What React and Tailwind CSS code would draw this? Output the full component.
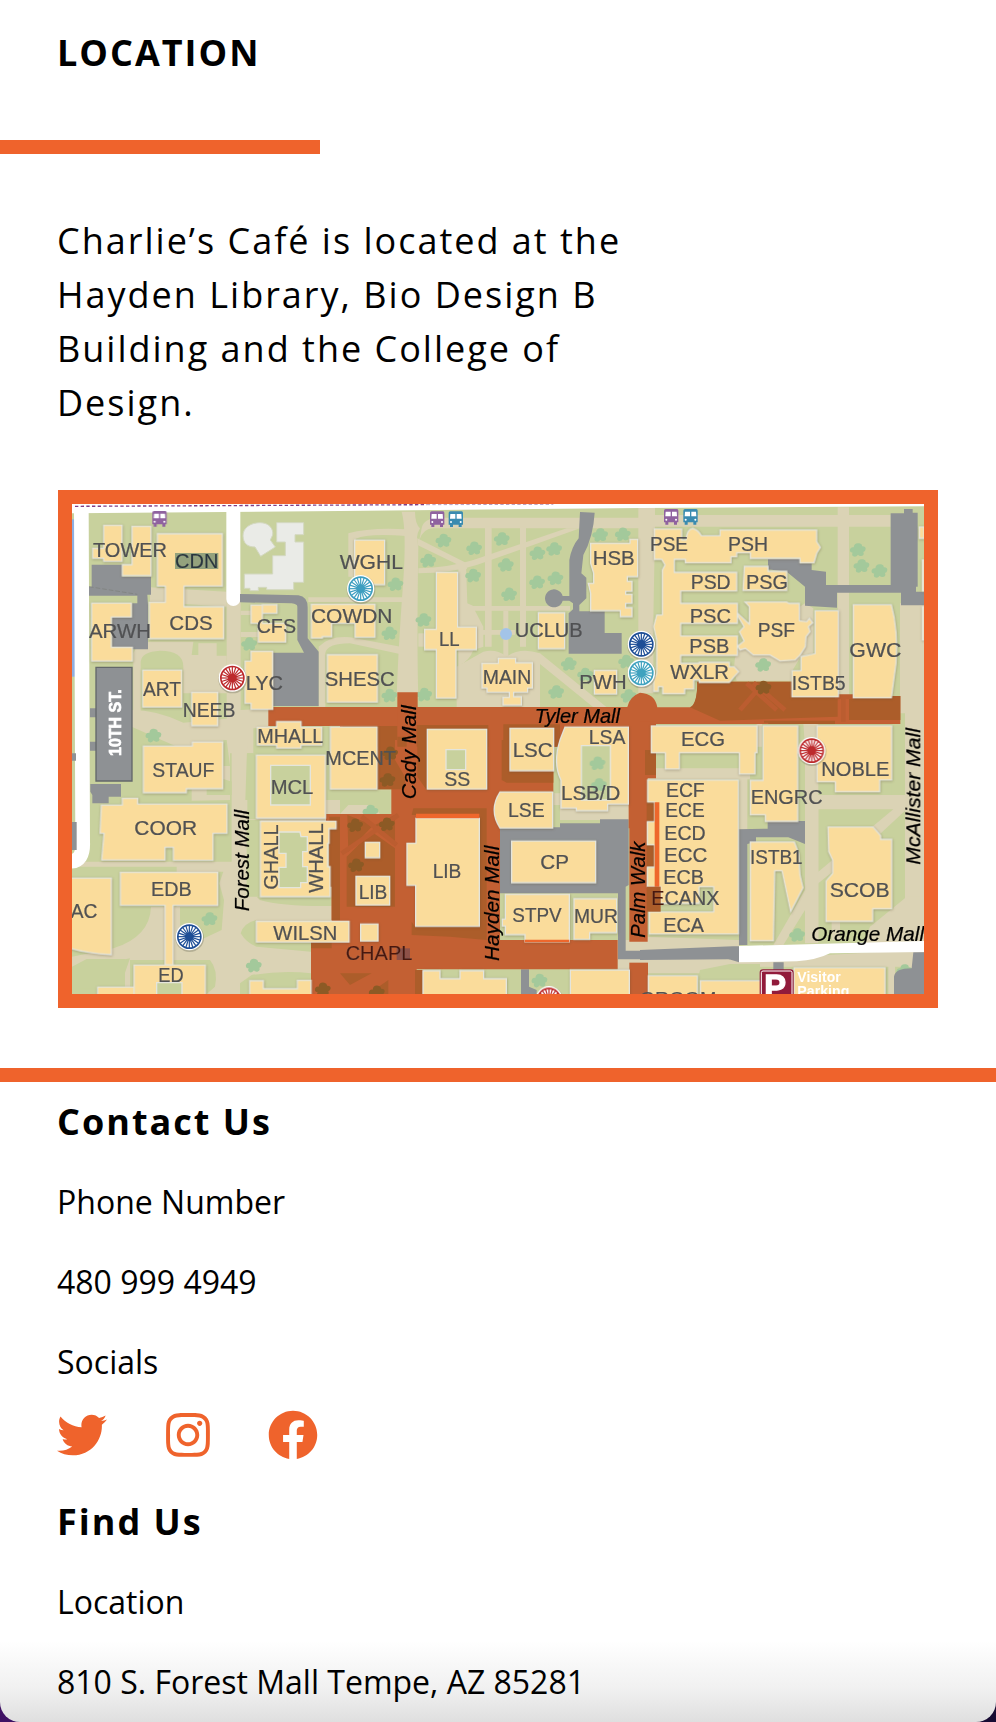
import { FaTwitter, FaInstagram, FaFacebook } from "react-icons/fa";

// The map is drawn as six tiles; each tile has its own local origin.
const TILES = {
  nw: [0, 0],
  n: [870, 0],
  ne: [1770, 0],
  sw: [0, 780],
  s: [870, 780],
  se: [1770, 780],
};

function Layer({ shapes, ...rest }) {
  return (
    <g {...rest}>
      {Object.entries(shapes).map(([tile, paths]) => (
        <g key={tile} transform={`translate(${TILES[tile].join(" ")})`}>
          {paths.map((d, i) => (
            <path key={i} d={d} />
          ))}
        </g>
      ))}
    </g>
  );
}

const walks = {
  nw: [
    "M530 330H572V690L660 686V742L610 745V820H425L245 740V690Q320 690 400 728L530 716Z",
    "M300 322L530 335V380L300 365Z",
    "M250 700V520Q260 490 300 485H430L425 525H445V490H500V527H530V640H400V560Q400 512 330 512Q275 515 272 545V700Z",
    "M572 392H606V405H572ZM572 456H628V471H572Z",
    "M775 352H1060V366H775Z",
    "M806 690V500Q840 466 900 472L1060 502V524L900 490Q830 490 826 520V690Z",
    "M895 290V160Q960 142 1070 148V168Q950 160 918 176V290Z",
  ],
  n: [
    "M185 95H225Q225 130 240 145Q225 170 235 200Q230 500 235 650H170Q175 500 190 300Q200 150 185 95Z",
    "M245 145Q250 113 300 113H900V145H280Q250 145 238 180Z",
    "M435 140H455V500H435ZM540 140H558V500H540Z",
    "M232 175L385 252L380 268L345 250L232 195Z",
    "M235 265Q330 262 400 240L680 145H720L410 255Q330 280 235 280Z",
    "M355 255H378L382 370L400 378H690V392H405L430 440V500L400 510Q390 540 355 560Z",
    "M490 392H505V530H490ZM405 450H525V464H405Z",
    "M350 560L430 515Q470 505 500 530Q540 500 600 520L800 682H760L600 552V682H350Z",
    "M235 460H256V500H235Z",
  ],
  ne: [
    "M15 72H45V150L40 420V640H-5V72Z",
    "M45 105H752V140H45Z",
    "M593 82H627V650H593Z",
    "M290 515L330 480L495 370L520 385V520L482 530L455 575V602H290Q275 560 290 515Z",
    "M780 370H852V1500H795V700H780Z",
    "M350 700H366V800H350ZM490 730H535V1385H495V800Z",
  ],
  sw: [
    "M425 0H540V180L425 182Z",
    "M545 0H592L586 180H900V560H840V800H190L240 655L66 690V650L190 625Q300 590 303 500H380V380H66V365H545Z",
  ],
  s: [
    "M0 152H152V200L155 222H0Z",
    "M640 160H870V240H640ZM832 600H1170V690H832Z",
  ],
  se: [
    "M0 85H330V118H0ZM298 85H322V270H298Z",
    "M495 165H800V208H535V395L760 208H800L720 282L535 430V610H495V510L430 615H400L495 450Z",
    "M0 590H297V700H0ZM297 660L820 630V680H340V705H297ZM745 670H765V762H745Z",
    "M575 540H600V600H575ZM690 560L800 470H852V610H670Z",
  ],
};

const lawns = {
  sw: [
    "M470 100L545 125V165H470ZM520 0H530L540 78H520Z",
    "M572 580Q580 550 618 540V600H783V635L620 620Q590 610 572 580Z",
    "M620 470H845V498Q700 500 630 480Z",
    "M240 660H480Q505 690 495 740L470 762H240ZM66 680L110 657H225V745H90L66 720Z",
    "M390 500H503V395H520L508 430L522 480L515 570L440 605L390 590Z",
    "M570 762V730L605 705Q700 690 783 700V762Z",
    "M592 40H620V238H592ZM590 240H632V470H590Z",
  ],
  s: ["M0 152H152V222H120L95 195H25L0 222ZM430 690H695V762H430ZM640 195H660V265H640Z"],
  se: [
    "M735 50H795V165H755V120H735ZM765 350H795V470L700 545V508H760Z",
    "M23 575H297V600L23 590ZM180 690L270 672H360V725H172Z",
  ],
};

const roads = {
  nw: [
    "M125 254H217V290H303V344H292L294 375V508H186V410H246V370H262V347H117V320H125Z",
    "M570 342L745 346Q774 350 773 385V475L806 515V678H668V518H762L742 480V380Q742 372 725 370L570 367Z",
    "M120 685H138V712H120ZM120 785H138V812H120Z",
  ],
  n: [
    "M720 96L764 98Q760 170 730 225L724 280L739 293V355L718 375V394H794V459H845V521H686V400L699 388V370L688 362H668A27 27 0 1 1 668 348H688V240Q695 200 716 175Z",
  ],
  ne: [
    "M384 237H480V250H515V270L558 275V315H752V100H792V87H818V98H833V320H828V335H852V376H783V338H591V383L495 377V320L440 275L384 268Z",
  ],
  sw: ["M121 132H213V170H176V190H127V165L121 155ZM66 40H78V62H66ZM66 246H80V330H66Z"],
  s: [
    "M480 262H660V250H780V238H866V435L857 440V632H1170V658H834V460H480Z",
    "M543 688H567V740L590 750V762H543Z",
  ],
  se: [
    "M295 268L383 266V243H495V312L445 292H348V305L322 312V615H297V667L265 657L0 660V630L297 618Z",
    "M400 667H431V690H400ZM820 637H852V762H762V710Q765 685 815 685Z",
  ],
};

const mallRed = {
  nw: ["M655 681H1050V780H878V738H655Z"],
  n: ["M172 637H233V681H862Q868 650 900 638Q945 640 952 682H1050Q1072 676 1072 605H1356V648H1681V732H924V800H0V738H172Z"],
  sw: ["M828 222H1030V762H783V605H845V427H838V270H828Z"],
  s: [
    "M0 0H948V115H923V605H868V265H866V-20H640V155H480V600H833V688H230V762H0V222H154V148H112V0Z",
    "M868 668H924V762H868Z",
  ],
  ne: ["M0 725H48V800H0Z"],
};

const mallShade = {
  nw: ["M878 738H1042V780H878Z"],
  n: ["M172 770H200V800H172ZM230 735H445V800H230ZM490 733H660V800H490Z"],
  ne: ["M172 605H456V648H593V710L240 722L150 682Q172 672 172 605ZM627 648H781V720H627Z", "M385 722H585V732H385ZM372 722H490V728H372Z"],
  sw: ["M838 230H870V440H838ZM783 605H845V625H783ZM845 430H870V540H845Z"],
  s: [
    "M112 0H165V60L195 110V148H112ZM232 0H262V148H440V0H445V150H260L232 110ZM485 0H510V95H640V128H500L485 120Z",
    "M220 205H440V600L330 590L215 585V545L225 560V436L201 435V310H228V225H215Z",
    "M22 225L100 255L25 335ZM165 225V310L105 255ZM20 350L95 275L165 325V500H20Z",
    "M0 700H95L30 735ZM85 762L145 720V762ZM225 690H250V762H225Z",
  ],
  se: ["M15 30H48V105H15ZM20 185H45V245H20ZM20 315H45V380H20Z"],
};

const buildings = {
  nw: [
    "M161 136H216V244H161V235H128V205H161Z",
    "M246 139H303V287H217V254H246Z",
    "M322 161H517V318H402V380H521V476H298V367H346V318H322Z",
    "M125 369H244V411H184V502H247V543H125Z",
    "M278 570H395V681H278Z",
    "M425 637H503V737H425Z",
    "M603 514H668V688H603V670H585V543H603Z",
    "M603 375H637V400H681V374H637V430H707V486H625V430H603Z",
    "M784 373H975V472H915V430H845V470H817V474H784Z",
    "M832 524H982V666H832Z",
    "M622 742H680V725H753V742H815V795H753V804H680V795H622Z",
    "M841 741H981V927H841Z",
  ],
  n: [
    "M44 180H134V314H44Z",
    "M289 277H353V441H409V509H348V654H289V509H254V448H289Z",
    "M475 535H527V548H577V624H563V637H521V650H544V675H489V652H508V637H441V624H426V550H475Z",
    "M595 398H674V506H595Z",
    "M752 190H870V178H893V290H862V304H876V334H857V343H876V370H857V383H876V410H841V392H752V340L745 310H761V280L752 250Z",
    "M763 571H830V642H763Z",
    "M262 748H440V927H262Z",
    "M510 745H641V872H510Z",
    "M675 741H865V972H803V992H709V984H663V900Q638 850 660 780Z",
  ],
  ne: [
    "M43 147H125V180H138Q140 148 158 145Q175 150 184 167H240V150H530V185L541 202L530 220L522 248H480V235H331V218H290V230H273V248H136V238H103V277H290V333H122V370H292V430H122V468H292V526H122V550H177V547H268V560H282L296 575L282 590L268 607H178V600H161V627H134V641H68V620H55V634H41V600L50 580V480L41 440L50 405H67V270L75 255L65 238H43Z",
    "M313 259H384V274H440V331H309Z",
    "M315 366H440L447 370H478V422L500 425L508 415L518 428L505 440L510 455L498 470L496 500L480 525L465 540L420 543L390 525H340L316 505L300 510L293 498L312 483L298 455L312 440L293 408V400L328 432V380Z",
    "M525 392H595V650H456V572H483V530L525 521Z",
    "M640 374H754Q775 450 768 550L754 653H640Z",
    "M838 141H852V175H838ZM847 240H852V333H847ZM847 380H852V480H847Z",
    "M34 738H351V818H345V882H298V818H118V867H76V818H34Z",
    "M369 738H473V1024H376V1004H331V901H369Z",
    "M531 738H755V900H719V935H586V905H531Z",
  ],
  sw: [
    "M280 18H427V6H518V146H409V158H280Z",
    "M154 195H217V175H263V192H531V280H489V361H370V322H345V360H155L162 280H150Z",
    "M211 397H503V496H369V675H345V496H211Z",
    "M60 414H184V644Q110 640 60 625Z",
    "M252 675H466V780H252ZM143 741H252V780H143Z",
    "M619 45H826V234H619Z",
    "M631 244H858V266H837V310H833V380H840V470H631Z",
    "M619 544H897V606H619Z",
    "M599 722H640V746H742V721H783V780H599Z",
  ],
  s: [
    "M228 235H418V559H227V436H201V310H228Z",
    "M76 307H119V353H76ZM48 409H149V495H48ZM62 552H114V603H62Z",
    "M480 156H638V264H480Q445 210 480 156Z",
    "M515 303H767V428H515Z",
    "M496 463H688V605H555V584H496V558H487V537H496Z",
    "M702 476H830V578H749V598H702Z",
    "M249 692H300V716H360V692H431V716H499V780H249ZM691 690H868V780H691Z",
  ],
  se: [
    "M23 120H295V582H28V516H221V440H177V490H62V440H22V382H44V314H22V245H44V186H23Z",
    "M331 306H463L476 340L480 405L489 443L452 515L426 392H404L400 602H331Z",
    "M564 261H699L722 287V298H755V506H698V544H558V423L578 400V360L566 335Z",
    "M25 707H172V780H25ZM181 722H365V780H181ZM462 683H735V780H462Z",
  ],
};

const courts = {
  n: ["M724 797H811V960H724Z"],
  sw: ["M662 76H781V195H662ZM687 276H750L753 290H772V335H758V380H772V428H752V443H687V382H708V340H687ZM320 728H396V780H320Z"],
  s: ["M318 29H377V89H318Z"],
};

const pale = {
  nw: [
    "M680 128H761V164H735V186H761V307H731V329H650V322H625V332H600V325H583V282H668V227H706V186H680Z",
    "M579 168C578 142 604 128 630 128C656 128 671 145 668 165L661 180L676 201L632 229L615 201C592 201 580 190 579 168Z",
  ],
};

const trees = {
  nw: [[597, 492], [310, 767]],
  n: [[310, 182], [402, 205], [485, 177], [264, 242], [497, 255], [592, 220], [642, 207], [399, 287], [166, 313], [507, 343], [591, 307], [646, 295], [250, 420], [148, 460], [148, 647], [252, 644], [686, 552], [648, 636], [848, 163], [780, 165], [865, 648], [735, 584], [858, 545]],
  ne: [[653, 210], [664, 258], [718, 273], [369, 555]],
  sw: [[478, 537], [611, 677]],
  s: [[91, 215], [598, 722]],
  se: [[471, 585], [793, 693]],
};

const courtTrees = { s: [[772, 70], [776, 135]] };

const shadedTrees = {
  ne: [[370, 623]],
  sw: [[818, 748]],
  s: [[45, 256], [140, 253], [48, 376], [142, 120], [110, 757], [150, 40]],
};

function Trees({ spots, fill }) {
  return (
    <g fill={fill}>
      {Object.entries(spots).flatMap(([tile, pts]) =>
        pts.map(([x, y]) => (
          <path
            key={`${tile}-${x}-${y}`}
            transform={`translate(${TILES[tile][0] + x} ${TILES[tile][1] + y})`}
            d="M-12-8Q-10-23 5-20Q14-18 13-11Q24-12 24-3Q23 5 17 6Q21 16 11 18Q4 19 1 14Q-5 23-13 19Q-19 15-15 8Q-25 8-23-2Q-20-10-12-8Z"
          />
        ))
      )}
    </g>
  );
}

// [tile, text, centre x, baseline, width]
const labels = [
  ["nw", "TOWER", 240, 231, 222],
  ["nw", "CDN", 440, 264, 130],
  ["nw", "CDS", 423, 450, 130],
  ["nw", "ARWH", 210, 475, 186],
  ["nw", "CFS", 679, 459, 118],
  ["nw", "ART", 336, 648, 114],
  ["nw", "LYC", 643, 631, 112],
  ["nw", "NEEB", 477, 711, 158],
  ["nw", "MHALL", 721, 790, 198],
  ["n", "WGHL", 94, 266, 190],
  ["n", "COWDN", 35, 428, 244],
  ["n", "LL", 328, 497, 62],
  ["n", "SHESC", 59, 617, 210],
  ["n", "UCLUB", 626, 470, 204],
  ["n", "MAIN", 501, 611, 146],
  ["n", "HSB", 821, 255, 126],
  ["n", "PWH", 789, 626, 142],
  ["n", "LSA", 801, 793, 110],
  ["ne", "PSE", 87, 213, 114],
  ["ne", "PSH", 324, 213, 120],
  ["ne", "PSD", 212, 327, 120],
  ["ne", "PSG", 381, 327, 126],
  ["ne", "PSC", 211, 429, 124],
  ["ne", "PSF", 409, 472, 112],
  ["ne", "PSB", 208, 519, 120],
  ["ne", "WXLR", 179, 597, 176],
  ["ne", "ISTB5", 536, 629, 162],
  ["ne", "GWC", 706, 530, 156],
  ["ne", "ECG", 189, 797, 132],
  ["sw", "STAUF", 400, 110, 186],
  ["sw", "MCL", 726, 163, 128],
  ["sw", "COOR", 347, 286, 188],
  ["sw", "EDB", 364, 469, 122],
  ["sw", "AC", 102, 535, 80],
  ["sw", "ED", 363, 727, 76],
  ["sw", "WILSN", 766, 600, 192],
  ["s", "MCENT", 62, 74, 212],
  ["s", "SS", 352, 138, 78],
  ["s", "LSC", 578, 51, 120],
  ["s", "LSB/D", 752, 180, 178],
  ["s", "LSE", 559, 231, 110],
  ["s", "LIB", 321, 414, 86],
  ["s", "LIB", 99, 477, 86],
  ["s", "CP", 644, 386, 86],
  ["s", "STPV", 591, 547, 148],
  ["s", "MUR", 768, 550, 132],
  ["se", "ECF", 136, 170, 116],
  ["se", "ECE", 135, 232, 118],
  ["se", "ECD", 135, 299, 124],
  ["se", "ECC", 137, 366, 130],
  ["se", "ECB", 131, 431, 122],
  ["se", "ECANX", 136, 494, 204],
  ["se", "ECA", 131, 576, 122],
  ["se", "ENGRC", 440, 191, 216],
  ["se", "NOBLE", 646, 107, 204],
  ["se", "ISTB1", 409, 372, 158],
  ["se", "SCOB", 659, 471, 180],
  ["se", "GROOM", 114, 799, 230],
];

function MapText({ x, y, width, rotate, children, ...rest }) {
  return (
    <text
      transform={`translate(${x} ${y})${rotate ? " rotate(-90)" : ""}`}
      textAnchor="middle"
      textLength={width}
      lengthAdjust="spacingAndGlyphs"
      {...rest}
    >
      {children}
    </text>
  );
}

function Bus({ x, y, color }) {
  return (
    <g transform={`translate(${x} ${y})`} fill={color}>
      <path d="M5 0H39Q43 0 43 5V40H39V47H30V40H13V47H4V40H0V5Q0 0 5 0Z" />
      <path d="M5 8H20V22H4ZM24 8H38L39 22H24Z" fill="#fff" />
      <circle cx="7" cy="32" r="3" fill="#fff" />
      <circle cx="36" cy="32" r="3" fill="#fff" />
    </g>
  );
}

const SPOKES = Array.from({ length: 20 }, (_, i) => i * 18);

function Wheel({ x, y, color }) {
  return (
    <g transform={`translate(${x} ${y})`}>
      <circle cx="1" cy="3" r="43" fill="#6b6b55" opacity="0.35" />
      <circle r="41" fill="#fff" />
      <circle r="34.5" fill="#fff" stroke={color} strokeWidth="5" />
      <g stroke={color} strokeWidth="3.6">
        {SPOKES.map((a) => (
          <path key={a} d="M0 8V34" transform={`rotate(${a})`} />
        ))}
      </g>
      <circle r="13" fill={color} />
    </g>
  );
}

function CampusMap() {
  return (
    <svg viewBox="66 72 2556 1470" className="block h-full w-full font-['Liberation_Sans',sans-serif]" role="img">
      <path fill="#c8d19d" d="M66 72H2622V1542H66Z" />
      <Layer shapes={walks} fill="#dbd3b5" />
      <Layer shapes={lawns} fill="#c8d19d" />
      <path fill="#8faee0" d="M66 118H75V590H66Z" />
      <path fill="#fff" d="M66 72H2622V79L1770 84L870 93L66 100Z" />
      <path d="M94 90L98 1085Q101 1144 60 1144" fill="none" stroke="#fff" strokeWidth="44" />
      <path d="M550 90V357" stroke="#fff" strokeWidth="42" strokeLinecap="round" />
      <path d="M75 79L1130 74" stroke="#7f3f86" strokeWidth="4" strokeDasharray="10 7" />
      <path d="M1130 74L1510 73" stroke="#b79bbd" strokeWidth="3" strokeDasharray="10 7" />
      <Trees spots={trees} fill="#a3c99b" />
      <Layer shapes={roads} fill="#8e9194" />
      <path fill="#fff" d="M2067 1398L2622 1383V1416L2340 1420Q2300 1440 2240 1444L2067 1447Z" />
      <path d="M117 320L262 343" stroke="#7b7f7a" strokeWidth="2" strokeDasharray="14 6" />
      <Layer shapes={pale} fill="#eaebe7" stroke="#d3d8c0" strokeWidth="3" />
      <Layer shapes={mallRed} fill="#c36033" />
      <Layer shapes={mallShade} fill="#ac5d2a" />
      <g stroke="#bb5d30" strokeWidth="14" fill="none">
        <path d="M875 1120L1045 1005M935 1010L1040 1095M2070 690L2140 610M2090 610L2180 690M2205 690L2110 608M2355 650H2410M2380 650V725" />
      </g>
      <Trees spots={shadedTrees} fill="#8c5a25" />
      <g className="drop-shadow-[1px_2px_3px_rgba(90,75,50,0.4)]">
        <Layer shapes={buildings} fill="#fadc9b" stroke="#e4e5dc" strokeWidth="4" />
      </g>
      <Layer shapes={courts} fill="#c8d19d" stroke="#e4e5dc" strokeWidth="4" />
      <Trees spots={courtTrees} fill="#a3c99b" />
      <path fill="#ee672c" d="M1098 1001H1288V1015H1098ZM1424 1379H1558V1387H1424ZM1814 967H1828V1220H1814Z" />
      <path fill="#ac5d2a" d="M1790 1220H1832V1295H1790Z" />
      <path fill="#8d5148" d="M1040 1405H1080V1440H1040Z" />
      <path fill="#94a27d" d="M375 219H505V267H375Z" />
      <path fill="#8e9194" stroke="#63676a" strokeWidth="4" d="M138 562H246V903H138Z" />

      <g fill="#505153" stroke="#505153" strokeWidth="0.7" fontSize="61">
        {labels.map(([tile, text, x, y, w]) => (
          <MapText
            key={`${tile}-${text}-${x}`}
            x={TILES[tile][0] + x}
            y={TILES[tile][1] + y}
            width={w}
            fill={text === "CDN" ? "#27363e" : undefined}
          >
            {text === "ECANX" ? (
              <>
                <tspan fill="#4a160c">E</tspan>CANX
              </>
            ) : (
              text
            )}
          </MapText>
        ))}
        <MapText x={987} y={1439} width={200} fill="#4a160c">CHAPL</MapText>
        <MapText x={684} y={1131} width={196} rotate>GHALL</MapText>
        <MapText x={818} y={1134} width={208} rotate>WHALL</MapText>
      </g>
      <g fill="#000" stroke="#000" strokeWidth="0.7" fontSize="61" fontStyle="italic">
        <MapText x={1582} y={728} width={256}>Tyler Mall</MapText>
        <MapText x={2453} y={1382} width={338}>Orange Mall</MapText>
        <MapText x={1098} y={817} width={282} rotate>Cady Mall</MapText>
        <MapText x={1346} y={1270} width={346} rotate>Hayden Mall</MapText>
        <MapText x={598} y={1142} width={304} rotate>Forest Mall</MapText>
        <MapText x={1786} y={1229} width={288} rotate>Palm Walk</MapText>
        <MapText x={2612} y={949} width={410} rotate>McAllister Mall</MapText>
      </g>
      <MapText x={212} y={728} width={200} rotate fill="#fff" stroke="#fff" strokeWidth="2" fontSize="48" fontWeight="700">
        10TH ST.
      </MapText>

      <Bus x={307} y={93} color="#8f629f" />
      <Bus x={1140} y={94} color="#8f629f" />
      <Bus x={1196} y={94} color="#3a8bb0" />
      <Bus x={1842} y={87} color="#8f629f" />
      <Bus x={1900} y={87} color="#3a8bb0" />
      <circle cx="1368" cy="462" r="18" fill="#a3c4e8" />
      <Wheel x={547} y={594} color="#bd2a2c" />
      <Wheel x={932} y={326} color="#3d9ec0" />
      <Wheel x={1774} y={493} color="#1e4e96" />
      <Wheel x={1774} y={579} color="#3fa2bf" />
      <Wheel x={2285} y={812} color="#bd2a2c" />
      <Wheel x={418} y={1370} color="#1e4e96" />
      <Wheel x={1497} y={1560} color="#bd2a2c" />

      <rect x="2131" y="1470" width="98" height="98" rx="8" fill="#911b3b" stroke="#911b3b" strokeWidth="4" />
      <rect x="2134" y="1473" width="92" height="94" rx="5" fill="none" stroke="#fff" strokeWidth="3" />
      <text x="2143" y="1554" fontSize="98" fontWeight="700" fill="#fff" stroke="#fff" strokeWidth="4">P</text>
      <g fill="#fff" fontSize="42" fontWeight="700">
        <MapText x={2307} y={1505} width={130}>Visitor</MapText>
        <MapText x={2320} y={1549} width={156}>Parking</MapText>
      </g>
    </svg>
  );
}

const body = "text-[32px] leading-[44px]";
const heading = "text-[36px] font-bold leading-[50px] tracking-[2px]";

export default function App() {
  return (
    <div className="h-[1722px] w-[996px] overflow-hidden bg-linear-to-r from-[#3f1164] to-[#170b33] font-['Open_Sans',sans-serif] text-black">
      <div className="h-full overflow-hidden rounded-b-[20px] bg-linear-to-b from-white from-[95.3%] via-[#f1f1f1] via-[98%] to-[#dfdfdf]">
        <section>
          <h1 className={`${heading} pt-[28px] pl-[57px]`}>LOCATION</h1>
          <div className="mt-[62px] h-[14px] w-[320px] bg-[#ef632c]" />
          <p className="mt-[60px] ml-[57px] w-[600px] text-[36px] leading-[54px] tracking-[2px]">
            Charlie’s Café is located at the Hayden Library, Bio Design B Building and the College of Design.
          </p>
          <div className="mt-[60px] ml-[58px] h-[518px] w-[880px] border-[14px] border-[#ef632c]">
            <CampusMap />
          </div>
        </section>
        <footer className="mt-[60px] border-t-[14px] border-[#ef632c] pl-[57px]">
          <h2 className={`${heading} pt-[15px]`}>Contact Us</h2>
          <p className={`${body} mt-[33px]`}>Phone Number</p>
          <p className={`${body} mt-[36px]`}>480 999 4949</p>
          <p className={`${body} mt-[36px]`}>Socials</p>
          <div className="mt-[26px] flex gap-[55.5px] text-[50px] text-[#ef632c]">
            <FaTwitter />
            <FaInstagram />
            <FaFacebook />
          </div>
          <h2 className={`${heading} mt-[37px]`}>Find Us</h2>
          <p className={`${body} mt-[33px]`}>Location</p>
          <p className={`${body} mt-[36px]`}>810 S. Forest Mall Tempe, AZ 85281</p>
        </footer>
      </div>
    </div>
  );
}
